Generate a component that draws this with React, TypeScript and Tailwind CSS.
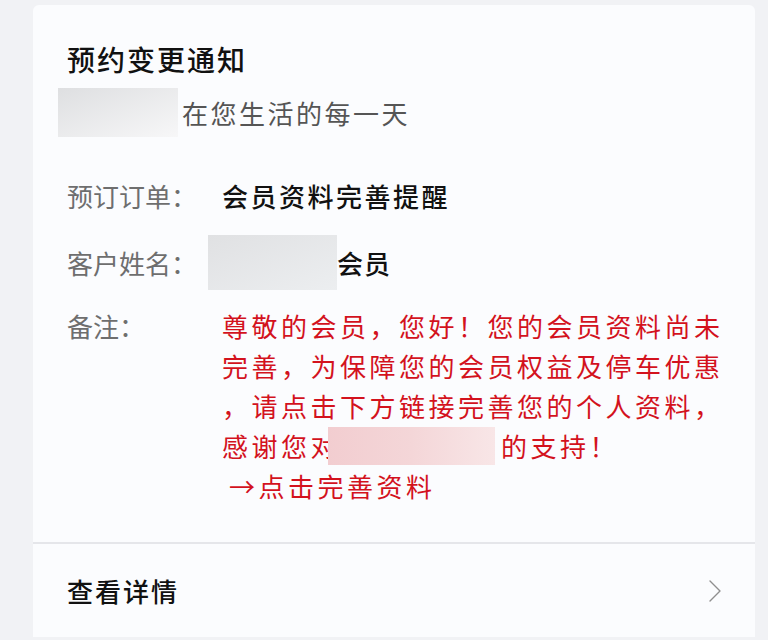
const cjk = { fontFamily: '"Noto Sans CJK SC", "Noto Sans", sans-serif' };

function Row({ label, children }: { label: string; children: React.ReactNode }) {
  return (
    <div className="flex items-center">
      <div className="w-[155px] shrink-0 text-[26px] text-[#6e6e6e] leading-[40px]">{label}</div>
      <div className="flex items-center text-[26px] font-medium text-[#111111] leading-[40px] tracking-[2.5px]">
        {children}
      </div>
    </div>
  );
}

export default function App() {
  return (
    <div className="min-h-[640px] bg-[#f1f2f5] pt-[5px] pl-[33px] pr-[13px]" style={cjk}>
      <div className="bg-[#fbfcfe] rounded-t-md">
        <div className="pl-[34px] pt-[34px] pb-[36px]">
          <h1 className="text-[28px] font-medium text-[#111111] leading-[40px] tracking-[2px]">
            预约变更通知
          </h1>
          <div className="mt-[9px] flex items-center -ml-[9px]">
            <div className="w-[120px] h-[49px] bg-gradient-to-br from-[#dedfe1] to-[#f7f7f8]" />
            <span className="ml-[4px] text-[26px] text-[#555555] leading-[40px] tracking-[2.5px]">
              在您生活的每一天
            </span>
          </div>

          <div className="mt-[39px]">
            <Row label="预订订单：">会员资料完善提醒</Row>
          </div>
          <div className="mt-[19px]">
            <div className="flex items-center">
              <div className="w-[141px] shrink-0 text-[26px] text-[#6e6e6e] leading-[40px]">客户姓名：</div>
              <div className="w-[129px] h-[55px] bg-gradient-to-br from-[#e0e1e3] to-[#eceef0]" />
              <span className="text-[26px] font-medium text-[#111111] leading-[40px] tracking-[1px]">会员</span>
            </div>
          </div>

          <div className="mt-[16px] flex">
            <div className="w-[155px] shrink-0 text-[26px] text-[#6e6e6e] leading-[40px]">备注：</div>
            <div className="text-[26px] text-[#d3121d] leading-[40px] tracking-[3.5px] whitespace-nowrap">
              <div>尊敬的会员，您好！您的会员资料尚未</div>
              <div>完善，为保障您的会员权益及停车优惠</div>
              <div>，请点击下方链接完善您的个人资料，</div>
              <div className="flex items-center">
                <span>感谢您对</span>
                <span className="inline-block w-[167px] h-[38px] -ml-[12px] bg-gradient-to-r from-[#f2cdd0] via-[#f4d6d8] to-[#f8e6e7]" />
                <span className="ml-[6px]">的支持！</span>
              </div>
              <div className="ml-[7px]">→点击完善资料</div>
            </div>
          </div>
        </div>

        <div className="h-[2px] bg-[#e5e6ea]" />

        <div className="h-[93px] pl-[34px] pr-[33px] flex items-center justify-between">
          <span className="text-[26px] font-medium text-[#111111] leading-[40px] tracking-[2px]">查看详情</span>
          <svg width="14" height="24" viewBox="0 0 14 24" fill="none">
            <polyline points="2,2 12,12 2,22" stroke="#8f8f8f" strokeWidth="1.4" strokeLinecap="round" strokeLinejoin="round" />
          </svg>
        </div>
      </div>
    </div>
  );
}
